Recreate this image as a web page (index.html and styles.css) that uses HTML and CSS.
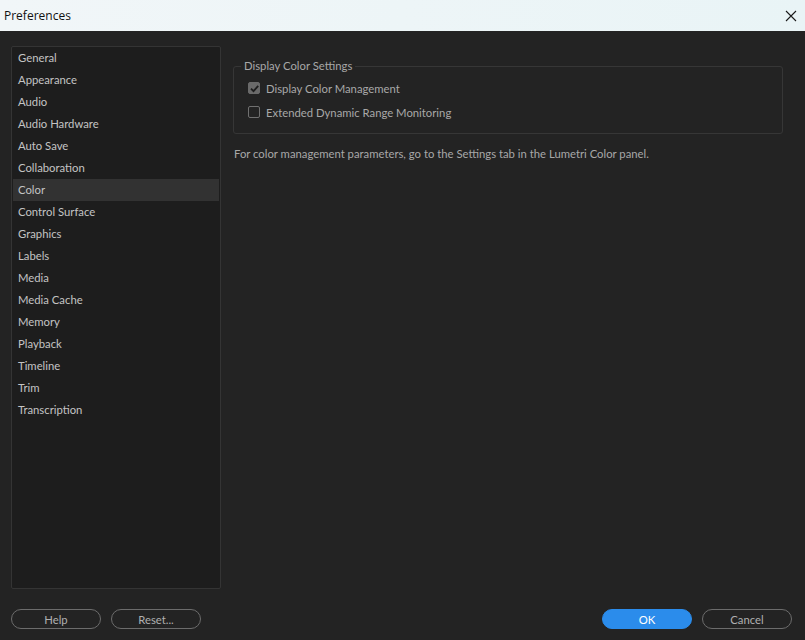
FILE: index.html
```html
<!DOCTYPE html>
<html>
<head>
  <meta charset="UTF-8">
  <title>Preferences</title>
  <link rel="stylesheet" href="styles.css">
</head>
<body>
  <div class="titlebar">
    <span class="title">Preferences</span>
    <svg class="close" viewBox="0 0 12 12" width="12" height="12">
      <path d="M1 1 L11 11 M11 1 L1 11" stroke="#1a1a1a" stroke-width="1.1" fill="none"/>
    </svg>
  </div>

  <div class="main">
    <ul class="sidebar">
      <li>General</li>
      <li>Appearance</li>
      <li>Audio</li>
      <li>Audio Hardware</li>
      <li>Auto Save</li>
      <li>Collaboration</li>
      <li class="active">Color</li>
      <li>Control Surface</li>
      <li>Graphics</li>
      <li>Labels</li>
      <li>Media</li>
      <li>Media Cache</li>
      <li>Memory</li>
      <li>Playback</li>
      <li>Timeline</li>
      <li>Trim</li>
      <li>Transcription</li>
    </ul>

    <div class="panel">
      <fieldset class="group">
        <legend>Display Color Settings</legend>
        <label class="check">
          <span class="box checked">
            <svg viewBox="0 0 13 13" width="13" height="13">
              <path d="M3 6.6 L5.5 9.2 L10.2 3.8" stroke="#1e1e1e" stroke-width="1.8" fill="none"/>
            </svg>
          </span>
          Display Color Management
        </label>
        <label class="check">
          <span class="box"></span>
          Extended Dynamic Range Monitoring
        </label>
      </fieldset>
      <p class="note">For color management parameters, go to the Settings tab in the Lumetri Color panel.</p>
    </div>
  </div>

  <div class="footer">
    <div class="left">
      <button class="btn">Help</button>
      <button class="btn">Reset...</button>
    </div>
    <div class="right">
      <button class="btn primary">OK</button>
      <button class="btn">Cancel</button>
    </div>
  </div>
</body>
</html>
```

FILE: styles.css
```css
body {
  margin: 0;
  width: 805px;
  height: 640px;
  background-color: #232323;
  font-family: Lato, "Noto Sans", sans-serif;
  font-size: 11.3px;
  color: #b4b4b4;
  overflow: hidden;
}

.titlebar {
  height: 31px;
  background: linear-gradient(to right, #f1f6f8, #e9f4f6);
  display: flex;
  align-items: center;
  justify-content: space-between;
  padding: 0 8px 0 4px;
}

.title {
  font-family: "Open Sans", sans-serif;
  font-size: 12px;
  color: #111;
}

.close {
  display: block;
}

.main {
  display: flex;
  padding: 15px 22px 0 11px;
  height: 543px;
}

.sidebar {
  list-style: none;
  margin: 0;
  padding: 0 1px;
  width: 206px;
  border: 1px solid #343434;
  border-radius: 2px;
  background-color: #1d1d1d;
  color: #c4c4c4;
}

.sidebar li {
  height: 22px;
  line-height: 22px;
  padding-left: 5px;
}

.sidebar li.active {
  background-color: #323232;
}

.panel {
  flex: 1;
  margin-left: 12px;
}

.group {
  margin: 13px 0 0 0;
  padding: 3px 8px 9px 14px;
  border: 1px solid #363636;
  border-radius: 3px;
}

.group legend {
  padding: 0 3px;
  margin-left: -7px;
  color: #a8a8a8;
  line-height: 14px;
}

.check {
  display: flex;
  align-items: center;
  height: 24px;
  color: #a8a8a8;
}

.box {
  width: 10px;
  height: 10px;
  border: 1.5px solid #707070;
  border-radius: 2px;
  margin-right: 6px;
  position: relative;
}

.box.checked {
  background-color: #6a6a6a;
  border-color: #6a6a6a;
}

.box svg {
  position: absolute;
  left: -1.5px;
  top: -1.5px;
}

.note {
  margin: 13px 0 0 1px;
  color: #a8a8a8;
}

.footer {
  display: flex;
  justify-content: space-between;
  padding: 20px 13px 0 11px;
}

.left,
.right {
  display: flex;
  gap: 10px;
}

.btn {
  width: 90px;
  height: 20px;
  border: 1px solid #6c6c6c;
  border-radius: 10px;
  background-color: transparent;
  color: #b0b0b0;
  font-family: Lato, "Noto Sans", sans-serif;
  font-size: 11.3px;
  line-height: 17px;
  padding: 0;
}

.btn.primary {
  background-color: #2b8ceb;
  border-color: #2b8ceb;
  color: #fff;
}
```
